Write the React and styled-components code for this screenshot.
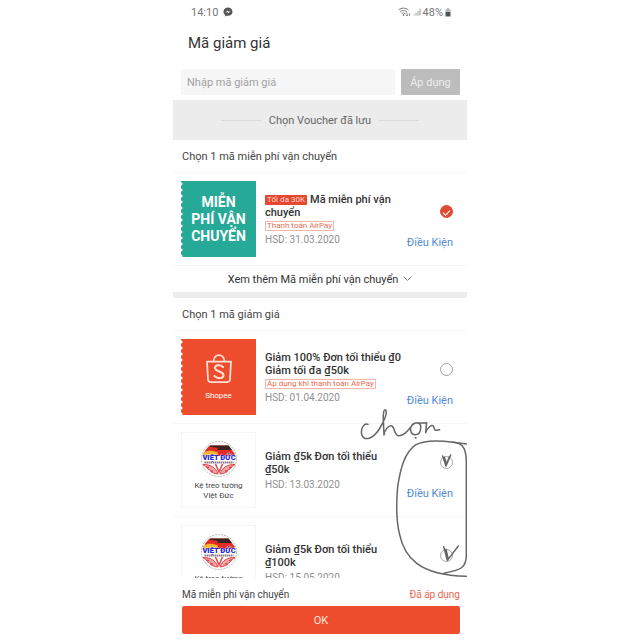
import React from "react";
import styled, { createGlobalStyle, css } from "styled-components";

const GlobalStyle = createGlobalStyle`
  * { box-sizing: border-box; }
  body { margin: 0; background: #fff; font-family: Roboto, "Noto Sans", sans-serif; color: #333; }
  button, input { font-family: inherit; }
`;

const Screen = styled.main`
  display: flex;
  flex-direction: column;
  width: 100%;
  max-width: 294px;
  height: 100vh;
  margin: 0 auto;
  background: #fff;
`;

const StatusBar = styled.div`
  flex: none;
  display: flex;
  justify-content: space-between;
  align-items: center;
  height: 24px;
  padding: 0 16px 0 18px;
  font-size: 11px;
  color: #777;
`;

const StatusGroup = styled.div`
  display: flex;
  align-items: center;
  gap: ${(p) => p.$gap}px;
`;

const Title = styled.h1`
  flex: none;
  margin: 0;
  padding: 0 15px;
  font-size: 15px;
  font-weight: 400;
  line-height: 38px;
  color: #333;
`;

const CodeForm = styled.form`
  flex: none;
  display: flex;
  gap: 6px;
  padding: 7px 7px 5px 8px;
`;

const CodeInput = styled.input`
  flex: 1;
  min-width: 0;
  height: 26px;
  padding: 0 6px;
  border: 0;
  background: #f6f6f6;
  font-size: 11px;
  color: #333;
  &::placeholder { color: #a2a2a2; opacity: 1; }
`;

const ApplyButton = styled.button`
  width: 59px;
  padding: 0;
  border: 0;
  border-radius: 1px;
  background: #bcbcbc;
  color: #eee;
  font-size: 11px;
`;

const SavedBand = styled.div`
  flex: none;
  display: flex;
  align-items: center;
  justify-content: center;
  gap: 8px;
  height: 40px;
  background: #ececec;
  font-size: 11px;
  color: #666;
  &::before, &::after {
    content: "";
    width: 40px;
    height: 1px;
    background: #d9d9d9;
  }
`;

const Scroller = styled.div`
  flex: 1;
  min-height: 0;
  overflow: hidden;
`;

const Section = styled.section`
  position: relative;
`;

const SectionTitle = styled.h2`
  margin: 0;
  padding: 1px 9px 0;
  border-bottom: 1px solid #f5f5f5;
  font-size: 11px;
  font-weight: 400;
  line-height: 31px;
  color: #444;
`;

const VoucherRow = styled.article`
  display: flex;
  gap: 9px;
  padding: 8px 14px 8px 8px;
  border-bottom: 1px solid #f5f5f5;
`;

const ticketColors = {
  teal: "#26a997",
  orange: "#ee4d2d",
};

const Ticket = styled.div`
  flex: none;
  display: flex;
  flex-direction: column;
  align-items: center;
  justify-content: center;
  width: 75px;
  height: 76px;
  text-align: center;
  ${(p) =>
    p.$tone === "plain"
      ? css`
          border: 1px solid #f5f5f5;
          font-size: 8px;
          line-height: 10px;
          color: #444;
        `
      : css`
          background:
            radial-gradient(circle at 0 50%, #fff 1px, transparent 2px) 0 0 / 3px 6px repeat-y,
            ${ticketColors[p.$tone]};
          color: #fff;
        `}
`;

const ShippingText = styled.strong`
  font-size: 14px;
  font-weight: 700;
  line-height: 17px;
`;

const ShopName = styled.span`
  margin-top: ${(p) => (p.$brand ? 8 : 3)}px;
  font-size: 8px;
  line-height: 10px;
`;

const Details = styled.div`
  flex: 1;
  min-width: 0;
  display: flex;
  flex-direction: column;
  align-items: flex-start;
  justify-content: center;
  white-space: nowrap;
`;

const VoucherName = styled.h3`
  margin: 0;
  font-size: 11px;
  font-weight: 500;
  line-height: 13px;
  color: #333;
`;

const Cap = styled.span`
  display: inline-block;
  padding: 0 2px;
  margin-right: 3px;
  border-radius: 1px;
  background: #e5472f;
  color: #ffd9d0;
  font-size: 8px;
  font-weight: 400;
  line-height: 10px;
  vertical-align: 1px;
`;

const PayTag = styled.span`
  margin-top: 2px;
  padding: 0 1px;
  border: 1px solid #f7b5a8;
  font-size: 8px;
  line-height: 8px;
  color: #ee6a50;
`;

const Expiry = styled.span`
  margin-top: 2px;
  font-size: 10px;
  line-height: 13px;
  color: #909090;
`;

const Actions = styled.div`
  flex: none;
  display: flex;
  flex-direction: column;
  align-items: flex-end;
  justify-content: space-between;
  padding: 24px 0 7px;
`;

const Choice = styled.input`
  appearance: none;
  display: grid;
  place-items: center;
  width: 13px;
  height: 13px;
  margin: 0;
  border: 1px solid #a5a5a5;
  border-radius: 50%;
  background: #fff;
  &:checked { border-color: #e04a33; background: #e04a33; }
  &:checked::after {
    content: "";
    width: 6px;
    height: 3px;
    border: solid #fff;
    border-width: 0 0 1px 1px;
    transform: rotate(-45deg);
  }
`;

const TermsLink = styled.a`
  font-size: 11px;
  line-height: 14px;
  color: #4f8bd6;
  text-decoration: none;
`;

const MoreButton = styled.button`
  display: flex;
  align-items: center;
  justify-content: center;
  gap: 5px;
  width: 100%;
  height: 26px;
  padding: 0;
  border: 0;
  background: #fff;
  font-size: 11px;
  color: #333;
`;

const Divider = styled.div`
  height: 6px;
  background: #ececec;
`;

const Handwriting = styled.svg`
  position: absolute;
  top: 102px;
  right: 0;
  width: 117px;
  height: 200px;
  pointer-events: none;
`;

const Footer = styled.footer`
  flex: none;
  padding: 9px 7px 6px 9px;
  background: #fff;
`;

const Summary = styled.div`
  display: flex;
  justify-content: space-between;
  padding-bottom: 3px;
  font-size: 10px;
  line-height: 16px;
  color: #444;
`;

const Applied = styled.span`
  color: #ee6350;
`;

const OkButton = styled.button`
  display: block;
  width: 100%;
  height: 28px;
  padding: 0;
  border: 0;
  border-radius: 2px;
  background: #ee4d2d;
  color: #ffe4dc;
  font-size: 11px;
`;

function MessengerIcon() {
  return (
    <svg width="10" height="10" viewBox="0 0 20 20" aria-hidden="true">
      <path d="M10 1C4.500 1 1 4.800 1 9.500c0 2.700 1.200 5 3.200 6.500V19l3-1.600c.9.200 1.800.3 2.800.3 5.500 0 9-3.700 9-8.200S15.500 1 10 1z" fill="#555" />
      <path d="M4.500 12l4.500-5 2.500 2.400L15.500 7.500 11 12.300 8.500 10z" fill="#fff" />
    </svg>
  );
}

function WifiIcon() {
  return (
    <svg width="13" height="10" viewBox="0 0 26 20" fill="none" stroke="#777" strokeWidth="2" aria-hidden="true">
      <path d="M1 6C7 1 15 1 21 6M4 10c4-4 10-4 14 0M7.500 13.500c2-2 5-2 7 0" />
      <circle cx="11" cy="16" r="1" fill="#777" />
      <path d="M18 11v7M15.500 15.500L18 18l2.500-2.500M23 18v-6" strokeWidth="1.500" />
    </svg>
  );
}

function SignalIcon() {
  return (
    <svg width="8" height="8" viewBox="0 0 16 16" fill="#999" aria-hidden="true">
      <path d="M1 13h2v2H1zM5 10h2v5H5zM9 6h2v9H9zM13 1h2v14h-2z" />
    </svg>
  );
}

function BatteryIcon() {
  return (
    <svg width="6" height="9" viewBox="0 0 12 18" aria-hidden="true">
      <path d="M4 0h4v2h3v6H1V2h3z" fill="#bbb" />
      <path d="M1 8h10v9H1z" fill="#555" />
    </svg>
  );
}

function ShopeeBag() {
  return (
    <svg width="26" height="29" viewBox="0 0 52 58" fill="none" stroke="#ffe1d6" strokeWidth="3.500" strokeLinecap="round" strokeLinejoin="round" aria-hidden="true">
      <path d="M2 15h48l-2 36q-.5 5-5 5H9q-4.500 0-5-5z" />
      <path d="M15 15C16 -2 36 -2 37 15" />
      <path d="M34 26c-5-5-16-5-16 2 0 8 17 6 17 14 0 8-12 8-18 2" strokeWidth="4" />
    </svg>
  );
}

function VietDucLogo() {
  return (
    <svg width="38" height="38" viewBox="0 0 76 76" aria-label="Việt Đức" role="img">
      <circle cx="38" cy="38" r="35" fill="#fff" stroke="#9b9b9b" strokeWidth="1.500" strokeDasharray="4 2" />
      <path d="M7 27L20 11h37l12 16v5H7z" fill="#e22c25" />
      <path d="M20 11h37l7 9H14z" fill="#3a2420" />
      <path d="M17 13l19 3-3 7H9z" fill="#e22c25" />
      <path d="M8 25c8-5 16-5 28 0l-3 8H8z" fill="#f4b62f" />
      <text x="38" y="40" textAnchor="middle" fontFamily="Roboto, sans-serif" fontSize="15" fontWeight="900" fill="#2525d8" stroke="#fff" strokeWidth="1" paintOrder="stroke">VIỆT ĐỨC</text>
      <path d="M9 45h58" stroke="#8a7780" strokeWidth="4" strokeDasharray="3 1" />
      <g fill="#f3a3a5" stroke="#dd4449" strokeWidth="2">
        <path d="M6 49c15 0 25 5 30 19-7-1-10-2-15-5l5-1c-6-1-10-3-13-7l5 0c-5-1-9-3-12-6z" />
        <path d="M70 49c-15 0-25 5-30 19 7-1 10-2 15-5l-5-1c6-1 10-3 13-7l-5 0c5-1 9-3 12-6z" />
        <path d="M31 48l7 16 7-16" fill="none" strokeWidth="3" />
      </g>
    </svg>
  );
}

function VietDucTicket() {
  return (
    <Ticket $tone="plain">
      <VietDucLogo />
      <ShopName>Kệ treo tường<br />Việt Đức</ShopName>
    </Ticket>
  );
}

function Voucher({ ticket, cap, lines, tag, expiry, group, checked }) {
  return (
    <VoucherRow>
      {ticket}
      <Details>
        <VoucherName>
          {cap && <Cap>{cap}</Cap>}
          {lines[0]}<br />{lines[1]}
        </VoucherName>
        {tag && <PayTag>{tag}</PayTag>}
        <Expiry>HSD: {expiry}</Expiry>
      </Details>
      <Actions>
        <Choice type="radio" name={group} defaultChecked={checked} aria-label={lines.join(" ")} />
        <TermsLink href="#terms">Điều Kiện</TermsLink>
      </Actions>
    </VoucherRow>
  );
}

export default function App() {
  return (
    <>
      <GlobalStyle />
      <Screen>
        <StatusBar>
          <StatusGroup $gap={5}>14:10 <MessengerIcon /></StatusGroup>
          <StatusGroup $gap={2}><WifiIcon /><SignalIcon /> 48%<BatteryIcon /></StatusGroup>
        </StatusBar>
        <Title>Mã giảm giá</Title>
        <CodeForm onSubmit={(e) => e.preventDefault()}>
          <CodeInput type="text" placeholder="Nhập mã giảm giá" aria-label="Nhập mã giảm giá" />
          <ApplyButton type="submit">Áp dụng</ApplyButton>
        </CodeForm>
        <SavedBand>Chọn Voucher đã lưu</SavedBand>
        <Scroller>
          <Section>
            <SectionTitle>Chọn 1 mã miễn phí vận chuyển</SectionTitle>
            <Voucher
              ticket={<Ticket $tone="teal"><ShippingText>MIỄN<br />PHÍ VẬN<br />CHUYỂN</ShippingText></Ticket>}
              cap="Tối đa 30K"
              lines={["Mã miễn phí vận", "chuyển"]}
              tag="Thanh toán AirPay"
              expiry="31.03.2020"
              group="shipping"
              checked
            />
            <MoreButton type="button">
              Xem thêm Mã miễn phí vận chuyển
              <svg width="9" height="6" viewBox="0 0 9 6" fill="none" stroke="#888" aria-hidden="true">
                <path d="M.5 .5l4 4 4-4" />
              </svg>
            </MoreButton>
          </Section>
          <Divider />
          <Section>
            <SectionTitle>Chọn 1 mã giảm giá</SectionTitle>
            <Voucher
              ticket={<Ticket $tone="orange"><ShopeeBag /><ShopName $brand>Shopee</ShopName></Ticket>}
              lines={["Giảm 100% Đơn tối thiểu ₫0", "Giảm tối đa ₫50k"]}
              tag="Áp dụng khi thanh toán AirPay"
              expiry="01.04.2020"
              group="discount"
            />
            <Voucher
              ticket={<VietDucTicket />}
              lines={["Giảm ₫5k Đơn tối thiểu", "₫50k"]}
              expiry="13.03.2020"
              group="discount"
            />
            <Voucher
              ticket={<VietDucTicket />}
              lines={["Giảm ₫5k Đơn tối thiểu", "₫100k"]}
              expiry="15.05.2020"
              group="discount"
            />
            <Handwriting viewBox="0 0 351 600" fill="none" stroke="#666" strokeWidth="4.500" strokeLinecap="round" strokeLinejoin="round" role="img" aria-label="chọn">
              <path d="M54 73C43 68 33 84 34 98C37 126 67 120 88 87C102 64 113 43 108 31C101 24 99 42 100 60L102 105C104 90 116 74 126 78C136 84 132 107 146 107C164 107 175 90 187 75C204 60 216 72 211 91C207 108 185 109 182 91C180 77 190 67 201 69C214 68 221 70 230 68L227 98C232 84 247 69 251 80C254 94 256 91 269 89" />
              <path d="M196 113l2 1" strokeWidth="5" />
              <path d="M349 132L310 127C275 122 226 119 198 134C161 158 150 214 143 260C139 306 139 362 148 400C163 472 205 525 349 529" />
              <path d="M310 127C344 130 349 153 349 190V460C350 507 330 510 282 520" />
              <path d="M278 168L288 198L302 165M283 172L290 192L298 170" />
              <path d="M281 440L292 481L325 438M288 448L294 474" />
            </Handwriting>
          </Section>
        </Scroller>
        <Footer>
          <Summary><span>Mã miễn phí vận chuyển</span><Applied>Đã áp dụng</Applied></Summary>
          <OkButton type="button">OK</OkButton>
        </Footer>
      </Screen>
    </>
  );
}
